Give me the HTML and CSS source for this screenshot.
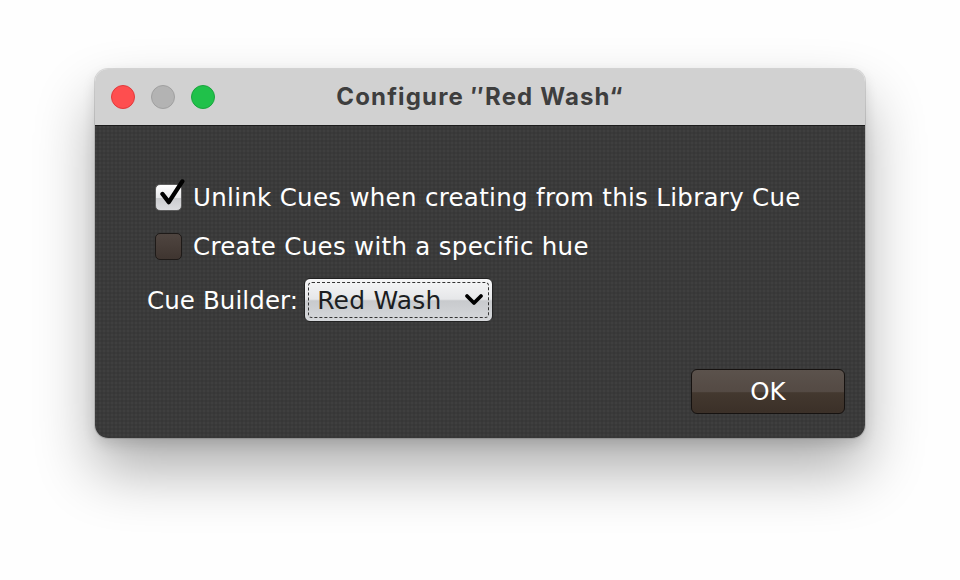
FILE: index.html
```html
<!DOCTYPE html>
<html>
<head>
<meta charset="utf-8">
<link rel="stylesheet" href="styles.css">
</head>
<body>
<div class="stage">
  <div class="window">
    <div class="titlebar">
      <div class="lights">
        <span class="light red"></span>
        <span class="light grey"></span>
        <span class="light green"></span>
      </div>
      <div class="title">Configure ″Red Wash“</div>
    </div>
    <div class="content">
      <div class="options">
        <label class="row">
          <span class="check on">
            <svg viewBox="0 0 30 30" class="tick"><path d="M5 15 L12 24 L27 1" fill="none" stroke="#000" stroke-width="4.8" stroke-linecap="round" stroke-linejoin="round"/></svg>
          </span>
          <span class="label">Unlink Cues when creating from this Library Cue</span>
        </label>
        <label class="row">
          <span class="check off"></span>
          <span class="label">Create Cues with a specific hue</span>
        </label>
        <div class="builder">
          <span class="label">Cue Builder:</span>
          <div class="select">
            <div class="focus">
              <span class="value">Red Wash</span>
              <svg viewBox="0 0 20 14" class="chev"><path d="M3 3 L10 10 L17 3" fill="none" stroke="#000" stroke-width="3.8" stroke-linecap="round" stroke-linejoin="round"/></svg>
            </div>
          </div>
        </div>
      </div>
      <div class="actions">
        <button class="ok">OK</button>
      </div>
    </div>
  </div>
</div>
</body>
</html>
```
FILE: styles.css
```css
html, body {
  margin: 0;
  padding: 0;
  background: #ffffff;
}
.stage {
  width: 960px;
  height: 580px;
  padding: 69px 0 0 95px;
  box-sizing: border-box;
  background: #fefefe;
}
.window {
  width: 770px;
  height: 369px;
  border-radius: 13px;
  overflow: hidden;
  display: flex;
  flex-direction: column;
  box-shadow: 0 0 0 1px rgba(0,0,0,0.12), 0 32px 60px rgba(0,0,0,0.32), 0 6px 14px rgba(0,0,0,0.12);
  font-family: "DejaVu Sans", "Liberation Sans", sans-serif;
}
.titlebar {
  height: 56px;
  flex: none;
  background: #d1d1d1;
  border-bottom: 1px solid #1c1c1c;
  display: flex;
  align-items: center;
  position: relative;
}
.lights {
  display: flex;
  gap: 16px;
  padding-left: 16px;
}
.light {
  width: 24px;
  height: 24px;
  border-radius: 50%;
  box-sizing: border-box;
}
.red { background: #fe4e4f; border: 1px solid #e1393b; }
.grey { background: #b3b3b3; border: 1px solid #a0a0a0; }
.green { background: #20c14a; border: 1px solid #1aa43d; }
.title {
  position: absolute;
  left: 0;
  right: 0;
  text-align: center;
  font-family: Inter, "Liberation Sans", sans-serif;
  font-weight: 700;
  font-size: 24px;
  letter-spacing: 1.15px;
  color: #3e3e3e;
  top: 13px;
}
.content {
  flex: 1;
  background-color: #3a3a3a;
  background-image:
    radial-gradient(circle at 1px 1px, rgba(255,255,255,0.025) 1px, transparent 1.5px),
    radial-gradient(circle at 3px 3px, rgba(0,0,0,0.06) 1px, transparent 1.5px);
  background-size: 4px 4px;
  display: flex;
  flex-direction: column;
  justify-content: space-between;
  padding: 58px 20px 24px 52px;
}
.options {
  display: flex;
  flex-direction: column;
}
.row {
  display: flex;
  align-items: center;
  height: 27px;
  margin-left: 8px;
  margin-bottom: 22px;
}
.label {
  color: #ffffff;
  font-size: 24.5px;
  letter-spacing: 0.3px;
}
.row .label { margin-left: 11px; }
.check {
  width: 27px;
  height: 27px;
  box-sizing: border-box;
  border-radius: 5px;
  position: relative;
  flex: none;
}
.check.on {
  background: linear-gradient(#ffffff, #e8e8ea 50%, #c9cacd 51%, #dcdde0);
  border: 1px solid #5e5e5e;
}
.check.off {
  background: linear-gradient(#4f4540, #3f3530);
  border: 1px solid #1e1a18;
}
.tick {
  position: absolute;
  left: 2px;
  top: -6px;
  width: 27px;
  height: 30px;
}
.builder {
  display: flex;
  align-items: center;
  margin-top: -4px;
}
.builder .label { letter-spacing: 0.1px; }
.select {
  margin-left: 6px;
  width: 189px;
  height: 44px;
  box-sizing: border-box;
  border-radius: 6px;
  border: 1px solid #222;
  background: linear-gradient(#f6f6f7, #e6e7e9 48%, #c8cacd 52%, #d6d8db);
  padding: 3px;
}
.focus {
  height: 100%;
  box-sizing: border-box;
  border: 1px dashed #333;
  border-radius: 4px;
  display: flex;
  align-items: center;
  justify-content: space-between;
  padding: 0 4px 0 8px;
}
.value {
  font-size: 25px;
  letter-spacing: 0.2px;
  color: #1c1e22;
}
.chev {
  width: 20px;
  height: 14px;
}
.actions {
  display: flex;
  justify-content: flex-end;
}
.ok {
  width: 154px;
  height: 45px;
  border-radius: 6px;
  border: 1px solid #161210;
  background: linear-gradient(#5b524c, #544a44 50%, #43382f 53%, #3b3028);
  color: #ffffff;
  font-family: "DejaVu Sans", "Liberation Sans", sans-serif;
  font-size: 24.5px;
  padding: 0;
}
```
